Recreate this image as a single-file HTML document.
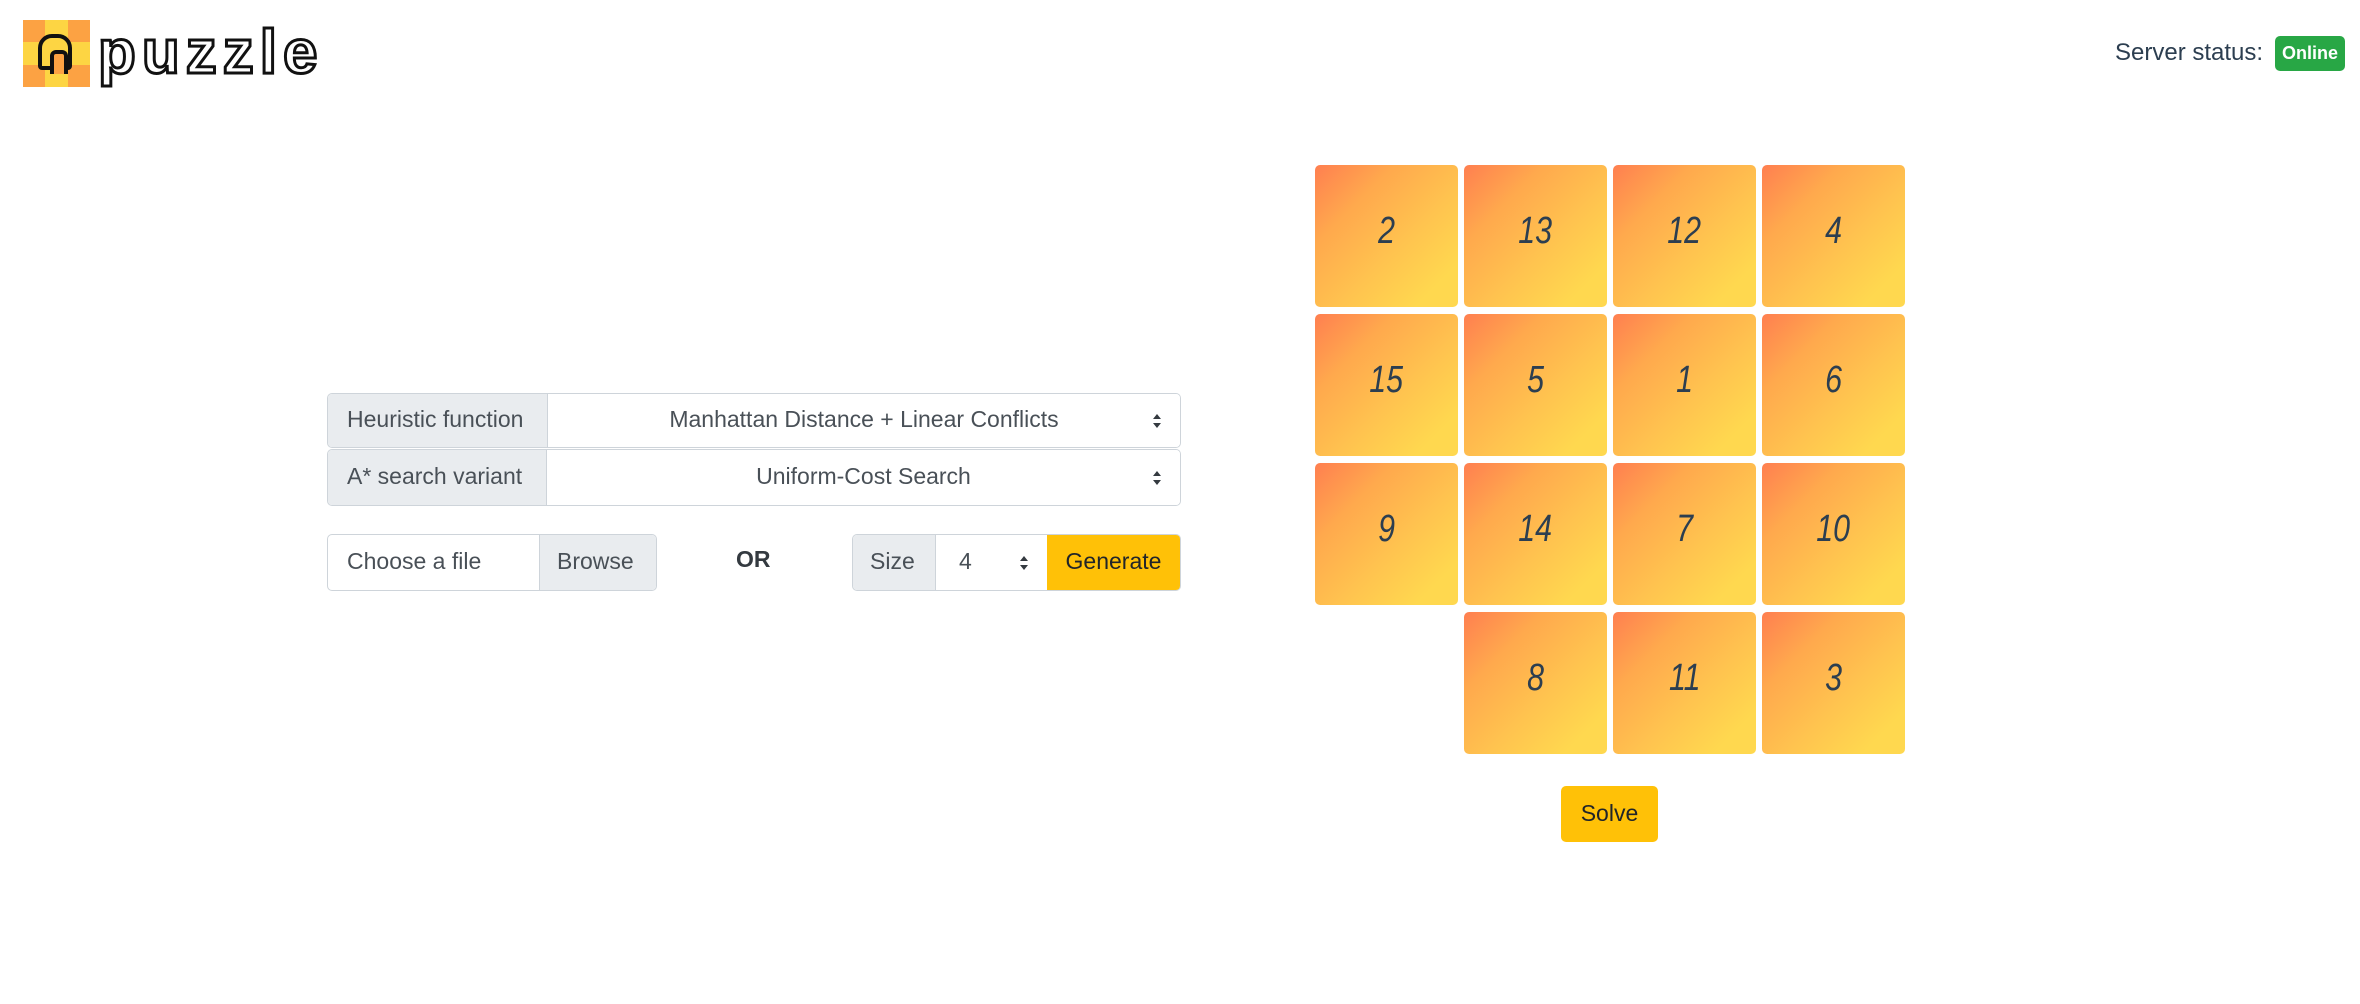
<!DOCTYPE html>
<html><head><meta charset="utf-8"><style>
*{box-sizing:border-box;margin:0;padding:0}
body{width:2360px;height:1004px;background:#fff;font-family:"Liberation Sans",sans-serif;color:#2c3e50;position:relative;overflow:hidden}
.abs{position:absolute}
.logo{left:23px;top:20px;width:67px;height:67px;display:grid;grid-template-columns:repeat(3,1fr)}
.logo div:nth-child(odd){background:#fca243}.logo div:nth-child(even){background:#fdd543}
.logotext{left:98px;top:18px;font-size:62px;font-weight:bold;color:#fff;-webkit-text-stroke:3px #111;letter-spacing:6px;line-height:70px;font-family:"Liberation Sans",sans-serif}
.n{left:38px;top:34px;width:34px;height:36px;border:4px solid #111;border-radius:14px 14px 4px 4px;background:#fdd543}
.n:after{content:"";position:absolute;left:8px;top:12px;width:10px;height:20px;border:4px solid #111;border-bottom:none;border-radius:6px 6px 0 0;background:#fca243}
.status{left:2115px;top:35px;font-size:24px;line-height:35px}
.badge{left:2275px;top:36px;width:70px;height:35px;background:#28a745;color:#fff;font-weight:bold;font-size:18px;border-radius:5px;text-align:center;line-height:35px}
.grp{border:1px solid #ced4da;border-radius:5px;display:flex;overflow:hidden;font-size:23px;color:#495057}
.pre{background:#e9ecef;border-right:1px solid #ced4da;display:flex;align-items:center;padding-left:19px;padding-bottom:2px}
.sel{flex:1;display:flex;align-items:center;justify-content:center;position:relative;background:#fff;padding-bottom:2px}
.arr{position:absolute;right:18px;top:50%;transform:translateY(-50%);width:10px;height:16px}
.tile{position:absolute;width:143px;height:142px;border-radius:5px;background:linear-gradient(135deg,#ff7f50 0%,#ffa94d 28%,#ffc34f 58%,#ffd84f 85%);display:flex;align-items:center;justify-content:center;font-size:38px;font-style:italic;color:#2c3e50;padding-bottom:10px;font-family:"Liberation Sans",sans-serif}
.tile span{display:inline-block;transform:scaleX(0.8)}
.btn{background:#ffc107;color:#212529;display:flex;align-items:center;justify-content:center;font-size:23px;padding-bottom:2px}
</style></head><body>
<div class="abs logo"><div></div><div></div><div></div><div></div><div></div><div></div><div></div><div></div><div></div></div>
<div class="abs n"></div>
<div class="abs logotext">puzzle</div>
<div class="abs status">Server status:</div>
<div class="abs badge">Online</div>

<div class="abs grp" style="left:327px;top:393px;width:854px;height:55px"><div class="pre" style="width:220px">Heuristic function</div><div class="sel">Manhattan Distance + Linear Conflicts<svg class="arr" viewBox="0 0 10 16"><path d="M5 1L9 6H1Z M5 15L9 10H1Z" fill="#343a40"/></svg></div></div>
<div class="abs grp" style="left:327px;top:449px;width:854px;height:57px"><div class="pre" style="width:219px">A* search variant</div><div class="sel">Uniform-Cost Search<svg class="arr" viewBox="0 0 10 16"><path d="M5 1L9 6H1Z M5 15L9 10H1Z" fill="#343a40"/></svg></div></div>

<div class="abs grp" style="left:327px;top:534px;width:330px;height:57px"><div style="flex:1;display:flex;align-items:center;padding-left:19px;padding-bottom:2px">Choose a file</div><div class="pre" style="width:117px;border-right:none;border-left:1px solid #ced4da;padding-left:17px">Browse</div></div>
<div class="abs" style="left:736px;top:546px;font-size:23px;font-weight:bold;color:#343a40">OR</div>
<div class="abs grp" style="left:852px;top:534px;width:329px;height:57px"><div class="pre" style="width:83px;padding-left:17px">Size</div><div class="sel" style="flex:none;width:111px;justify-content:flex-start;padding-left:23px">4<svg class="arr" viewBox="0 0 10 16"><path d="M5 1L9 6H1Z M5 15L9 10H1Z" fill="#343a40"/></svg></div><div class="btn" style="flex:1">Generate</div></div>

<div class="tile" style="left:1315px;top:165px"><span>2</span></div>
<div class="tile" style="left:1464px;top:165px"><span>13</span></div>
<div class="tile" style="left:1613px;top:165px"><span>12</span></div>
<div class="tile" style="left:1762px;top:165px"><span>4</span></div>
<div class="tile" style="left:1315px;top:314px"><span>15</span></div>
<div class="tile" style="left:1464px;top:314px"><span>5</span></div>
<div class="tile" style="left:1613px;top:314px"><span>1</span></div>
<div class="tile" style="left:1762px;top:314px"><span>6</span></div>
<div class="tile" style="left:1315px;top:463px"><span>9</span></div>
<div class="tile" style="left:1464px;top:463px"><span>14</span></div>
<div class="tile" style="left:1613px;top:463px"><span>7</span></div>
<div class="tile" style="left:1762px;top:463px"><span>10</span></div>
<div class="tile" style="left:1464px;top:612px"><span>8</span></div>
<div class="tile" style="left:1613px;top:612px"><span>11</span></div>
<div class="tile" style="left:1762px;top:612px"><span>3</span></div>

<div class="abs btn" style="left:1561px;top:786px;width:97px;height:56px;border-radius:5px">Solve</div>
</body></html>
